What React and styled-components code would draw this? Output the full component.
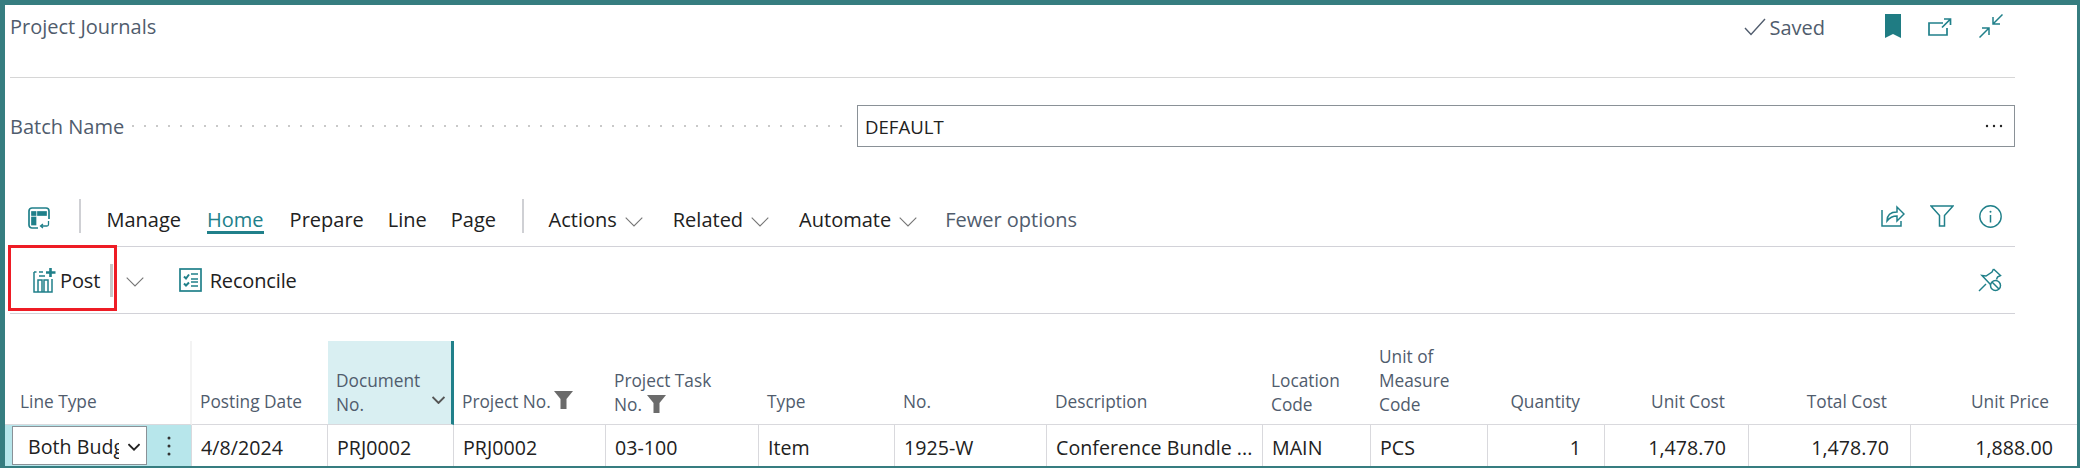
import React from 'react';
import styled, { createGlobalStyle } from 'styled-components';

const TEAL = '#20808a';
const Global = createGlobalStyle`
  html, body { margin: 0; padding: 0; background: #fff; }
  body { font-family: "Open Sans", "Noto Sans", sans-serif; }
  * { box-sizing: border-box; }
`;

const Frame = styled.div`
  position: relative;
  width: 2080px;
  height: 468px;
  overflow: hidden;
  background: #fff;
  border-style: solid;
  border-color: #367d80;
  border-width: 5px 3px 2px 5px;
  display: flex;
  flex-direction: column;
`;
const Upper = styled.div`
  padding: 0 62px 0 5px;
  display: flex;
  flex-direction: column;
`;
const TitleBar = styled.div`
  height: 73px;
  border-bottom: 1.5px solid #d6d6d6;
  display: flex;
  align-items: flex-start;
  padding: 8px 12px 0 0;
`;
const Title = styled.div`
  font-size: 20px;
  line-height: 28px;
  color: #505c6d;
  flex: 1;
`;
const Saved = styled.div`
  display: flex;
  align-items: center;
  gap: 3px;
  height: 28px;
  font-size: 20px;
  color: #505c6d;
  margin-right: 60px;
`;
const TitleIcons = styled.div`
  display: flex;
  align-items: flex-start;
  gap: 27px;
  margin-top: 1px;
`;
const OpenSlot = styled.div`
  margin-top: 4px;
`;
const FieldRow = styled.div`
  display: flex;
  align-items: center;
  height: 42px;
  margin-top: 27px;
`;
const FieldLabel = styled.div`
  font-size: 20px;
  color: #505c6d;
  white-space: nowrap;
  padding-top: 1px;
`;
const Leader = styled.div`
  flex: 1;
  height: 4px;
  margin: 0 7px;
  background-image: radial-gradient(circle at 2px 2px, #c9c9c9 1.1px, transparent 1.4px);
  background-size: 12px 4px;
`;
const Input = styled.div`
  width: 1158px;
  height: 42px;
  border: 1.5px solid #8a9197;
  padding: 0 11px 0 7px;
  display: flex;
  align-items: center;
  justify-content: space-between;
  font-size: 18.6px;
  color: #212121;
`;
const TabBar = styled.div`
  margin-top: 52px;
  height: 48px;
  border-bottom: 1.5px solid #d2d2d8;
  display: flex;
  align-items: flex-start;
  padding-left: 18px;
`;
const IconSlot = styled.div`
  height: 34px;
  display: flex;
  align-items: center;
  padding-top: ${p => p.$top || 0}px;
`;
const Divider = styled.div`
  width: 1.5px;
  height: 34px;
  background: #cfd0d4;
  margin: 0 ${p => p.$right}px 0 ${p => p.$left}px;
`;
const Tab = styled.div`
  height: 35px;
  padding-top: 3px;
  line-height: 36px;
  font-size: 20px;
  white-space: nowrap;
  color: ${p => (p.$active ? '#20808a' : p.$muted ? '#505c6d' : '#212121')};
  border-bottom: 3px solid ${p => (p.$active ? '#20808a' : 'transparent')};
  margin-right: ${p => p.$gap}px;
  display: flex;
  align-items: flex-start;
`;
const TabChevron = styled.span`
  display: inline-flex;
  margin-left: 8px;
  margin-top: 15px;
`;
const Spacer = styled.div`
  flex: 1;
`;
const TabTools = styled.div`
  display: flex;
  align-items: center;
  gap: 25px;
  height: 34px;
  padding-right: 13px;
`;
const ActionBar = styled.div`
  height: 67px;
  border-bottom: 1.5px solid #d2d2d8;
  display: flex;
  align-items: center;
  padding: 0 13px 0 23px;
`;
const ActionLabel = styled.span`
  font-size: 20px;
  letter-spacing: -0.15px;
  color: #212121;
  margin-left: ${p => p.$left}px;
`;
const SplitBar = styled.div`
  width: 2.5px;
  height: 33px;
  background: #c8c8c8;
  margin: 0 13px 0 10px;
`;
const ChevronSlot = styled.div`
  display: flex;
  margin-right: 35px;
  margin-top: 4px;
`;
const Highlight = styled.div`
  position: absolute;
  left: 3px;
  top: 240px;
  width: 109px;
  height: 66px;
  border: 3px solid #ee1c25;
  pointer-events: none;
`;
const Table = styled.div`
  margin-top: 27px;
  display: grid;
  grid-template-columns: 187px 136px 126px 152px 153px 136px 152px 216px 108px 117px 117px 144px 162px 1fr;
  grid-template-rows: 84px 41px;
`;
const Head = styled.div`
  display: flex;
  align-items: flex-end;
  justify-content: ${p => (p.$right ? 'flex-end' : 'flex-start')};
  gap: 3px;
  position: relative;
  padding: 0 ${p => (p.$right ? p.$pad || 24 : 8)}px ${p => (p.$multi ? 7 : 10)}px ${p => p.$left || 8}px;
  font-size: 17.3px;
  line-height: 24px;
  color: #505c6d;
  background: ${p => (p.$sorted ? '#d9eff2' : 'transparent')};
  border-right: ${p => (p.$sorted ? '3px solid #20808a' : p.$soft ? '2px solid #f3f3f3' : 'none')};
  border-bottom: 1.5px solid #d9d9dd;
`;
const HeadText = styled.div`
  white-space: pre-line;
`;
const SortMark = styled.span`
  position: absolute;
  right: 6px;
  bottom: 20px;
  display: flex;
`;
const FilterMark = styled.span`
  display: inline-flex;
  margin-bottom: ${p => p.$bottom}px;
  margin-left: ${p => p.$left || 0}px;
`;
const Cell = styled.div`
  display: flex;
  align-items: center;
  justify-content: ${p => (p.$right ? 'flex-end' : 'flex-start')};
  padding: 3px ${p => (p.$right ? p.$pad || 23 : 8)}px 0 9px;
  font-size: 19.6px;
  letter-spacing: 0.05px;
  color: #212121;
  border-right: ${p => (p.$last ? 'none' : '1.5px solid #d9d9dd')};
  white-space: nowrap;
  overflow: hidden;
`;
const TypeCell = styled.div`
  display: flex;
  background: #b7e6eb;
  padding-top: 1px;
  border-right: 1.5px solid #d9d9dd;
`;
const SelectBox = styled.div`
  margin-left: 7px;
  width: 135px;
  height: 39px;
  background: #fff;
  border: 1.5px solid #8a9197;
  display: flex;
  align-items: center;
  padding: 2px 6px 0 15px;
  font-size: 19.6px;
  letter-spacing: 0.05px;
  color: #212121;
`;
const SelectText = styled.span`
  width: 91px;
  margin-right: 9px;
  overflow: hidden;
  white-space: nowrap;
  flex: none;
`;
const Kebab = styled.div`
  flex: 1;
  display: flex;
  align-items: center;
  justify-content: center;
`;

const Stroke = ({ w, h = w, vb, children, color = TEAL, sw = 1.6 }) => (
  <svg width={w} height={h} viewBox={vb || `0 0 ${w} ${h}`} fill="none" stroke={color} strokeWidth={sw}>
    {children}
  </svg>
);

const Check = () => (
  <Stroke w={22} h={18} color="#505c6d" sw={1.4}><path d="M1 10l6 6.500L21 1" /></Stroke>
);
const Bookmark = () => (
  <svg width="16" height="24" viewBox="0 0 16 24"><path d="M0 0h16v24l-8-4-8 4z" fill="#1f7c83" /></svg>
);
const OpenNew = () => (
  <Stroke w={24} h={18} sw={1.7}>
    <path d="M15 5H1v12h18v-7" />
    <path d="M14 9.500l8-8M16 1h6.500v6" />
  </Stroke>
);
const Collapse = () => (
  <Stroke w={24} h={24} sw={1.5}>
    <path d="M23.500.5L14 10M14 3v7h7" />
    <path d="M.5 23.500L10 14M3 14h7v7" />
  </Stroke>
);
const Layout = () => (
  <Stroke w={22} h={22} sw={1.7}>
    <path d="M10 21H4a3 3 0 0 1-3-3V4a3 3 0 0 1 3-3h14a3 3 0 0 1 3 3v8" />
    <rect x="4" y="5" width="3.500" height="3" fill={TEAL} />
    <rect x="4" y="10.500" width="3.500" height="7" fill={TEAL} />
    <rect x="10" y="5" width="8" height="3" fill={TEAL} />
    <path d="M20.500 14v3.500a1.500 1.500 0 0 1-1.500 1.500h-6M15 17l-2.500 2 2.500 2" strokeWidth="1.300" />
  </Stroke>
);
const Chevron = ({ w = 18, h = 10, color = '#767676', sw = 1.1 }) => (
  <svg width={w} height={h} viewBox="0 0 18 10" fill="none" stroke={color} strokeWidth={sw}>
    <path d="M.7.7L9 9l8.300-8.300" />
  </svg>
);
const PostIcon = () => (
  <Stroke w={23} h={25} sw={1.5}>
    <path d="M1 4v20h18V11" />
    <path d="M1 4h2.500M6 4h4M6 8h6" />
    <path d="M5 24V12h4v12M11 24V12h4v12" />
    <path d="M17.500 0v9M13 4.500h9.500" strokeWidth="2.600" />
  </Stroke>
);
const ReconcileIcon = () => (
  <Stroke w={23} h={24} sw={1.7}>
    <rect x="1" y="1" width="21" height="22" />
    <path d="M5 8.500l2 2 3-4M5 15.500l2 2 3-3" strokeWidth="2" />
    <path d="M12 6h7M12 11h7M12 14h7M12 18h7" strokeWidth="1.600" />
  </Stroke>
);
const ShareIcon = () => (
  <Stroke w={24} h={22} sw={1.5}>
    <path d="M1 5v16h19v-5" />
    <path d="M6 16c0-6 4-9 10-9V2l7 7-7 7v-5c-4 0-7 1-10 5z" />
  </Stroke>
);
const FunnelIcon = () => (
  <Stroke w={24} h={22} sw={1.5}>
    <path d="M1 1h22l-8.500 9.500V21h-5V10.500z" />
  </Stroke>
);
const InfoIcon = () => (
  <svg width="23" height="23" viewBox="0 0 23 23" fill="none" stroke={TEAL}>
    <circle cx="11.500" cy="11.500" r="10.700" strokeWidth="1.400" />
    <path d="M11.500 10v7.500" strokeWidth="1.500" />
    <circle cx="11.500" cy="6.800" r="1" fill={TEAL} stroke="none" />
  </svg>
);
const PinIcon = () => (
  <Stroke w={24} h={24} sw={1.5}>
    <path d="M1 23l7-7" />
    <path d="M15.500 1l7 6.500-3 1.500-1 2.500M15.500 1l-1.500 3-6 4-4-.5 8.500 9" />
    <circle cx="17.500" cy="17.500" r="5" />
    <path d="M14 14l7 7" />
  </Stroke>
);
const HeadFilter = () => (
  <svg width="19" height="18" viewBox="0 0 19 18"><path d="M0 0h19l-6.500 8v10h-6V8z" fill="#6b6b6b" /></svg>
);
const MoreDots = () => (
  <svg width="18" height="4" viewBox="0 0 18 4" fill="#222">
    <circle cx="2" cy="2" r="1.200" /><circle cx="9" cy="2" r="1.200" /><circle cx="16" cy="2" r="1.200" />
  </svg>
);

const tabs = [
  { label: 'Manage', gap: 26 },
  { label: 'Home', gap: 26, active: true },
  { label: 'Prepare', gap: 24 },
  { label: 'Line', gap: 24 },
  { label: 'Page', gap: 0 },
];
const menus = [
  { label: 'Actions', gap: 30 },
  { label: 'Related', gap: 30 },
  { label: 'Automate', gap: 28 },
];

const plainHeads = [
  { text: 'Type', },
  { text: 'No.' },
  { text: 'Description' },
  { text: 'Location\nCode', multi: true },
  { text: 'Unit of\nMeasure\nCode', multi: true },
  { text: 'Quantity', right: true, pad: 25 },
  { text: 'Unit Cost', right: true, pad: 24 },
  { text: 'Total Cost', right: true, pad: 24 },
  { text: 'Unit Price', right: true, pad: 28 },
];
const cells = [
  { text: '4/8/2024' },
  { text: 'PRJ0002' },
  { text: 'PRJ0002' },
  { text: '03-100' },
  { text: 'Item' },
  { text: '1925-W' },
  { text: 'Conference Bundle ...' },
  { text: 'MAIN' },
  { text: 'PCS' },
  { text: '1', right: true, pad: 23 },
  { text: '1,478.70', right: true, pad: 22 },
  { text: '1,478.70', right: true, pad: 21 },
  { text: '1,888.00', right: true, pad: 24, last: true },
];

export default function App() {
  return (
    <Frame>
      <Global />
      <Upper>
        <TitleBar>
          <Title>Project Journals</Title>
          <Saved><Check />Saved</Saved>
          <TitleIcons>
            <Bookmark />
            <OpenSlot><OpenNew /></OpenSlot>
            <Collapse />
          </TitleIcons>
        </TitleBar>
        <FieldRow>
          <FieldLabel>Batch Name</FieldLabel>
          <Leader />
          <Input>DEFAULT<MoreDots /></Input>
        </FieldRow>
        <TabBar>
          <IconSlot $top={4}><Layout /></IconSlot>
          <Divider $left={29} $right={26} />
          {tabs.map(t => <Tab key={t.label} $active={t.active} $gap={t.gap}>{t.label}</Tab>)}
          <Divider $left={26} $right={25} />
          {menus.map(t => (
            <Tab key={t.label} $gap={t.gap}>{t.label}<TabChevron><Chevron /></TabChevron></Tab>
          ))}
          <Tab $muted $gap={0}>Fewer options</Tab>
          <Spacer />
          <TabTools><ShareIcon /><FunnelIcon /><InfoIcon /></TabTools>
        </TabBar>
        <ActionBar>
          <PostIcon />
          <ActionLabel $left={4}>Post</ActionLabel>
          <SplitBar />
          <ChevronSlot><Chevron /></ChevronSlot>
          <ReconcileIcon />
          <ActionLabel $left={8}>Reconcile</ActionLabel>
          <Spacer />
          <PinIcon />
        </ActionBar>
      </Upper>
      <Table>
        <Head $soft $left={15}><HeadText>Line Type</HeadText></Head>
        <Head><HeadText>Posting Date</HeadText></Head>
        <Head $sorted $multi>
          <HeadText>{'Document\nNo.'}</HeadText>
          <SortMark><Chevron w={13} h={8} color="#555" sw={2.8} /></SortMark>
        </Head>
        <Head>
          <HeadText>Project No.</HeadText>
          <FilterMark $bottom={5}><HeadFilter /></FilterMark>
        </Head>
        <Head $multi>
          <HeadText>{'Project Task\nNo.'}</HeadText>
          <FilterMark $bottom={4} $left={-67}><HeadFilter /></FilterMark>
        </Head>
        {plainHeads.map(h => (
          <Head key={h.text} $multi={h.multi} $right={h.right} $pad={h.pad}><HeadText>{h.text}</HeadText></Head>
        ))}

        <TypeCell>
          <SelectBox>
            <SelectText>Both Budget and Billable</SelectText>
            <Chevron w={13} h={8} color="#222" sw={2.8} />
          </SelectBox>
          <Kebab>
            <svg width="4" height="20" viewBox="0 0 4 20" fill="#333">
              <circle cx="2" cy="2" r="1.500" /><circle cx="2" cy="10" r="1.500" /><circle cx="2" cy="18" r="1.500" />
            </svg>
          </Kebab>
        </TypeCell>
        {cells.map((c, i) => (
          <Cell key={i} $right={c.right} $pad={c.pad} $last={c.last}>{c.text}</Cell>
        ))}
      </Table>
      <Highlight />
    </Frame>
  );
}
